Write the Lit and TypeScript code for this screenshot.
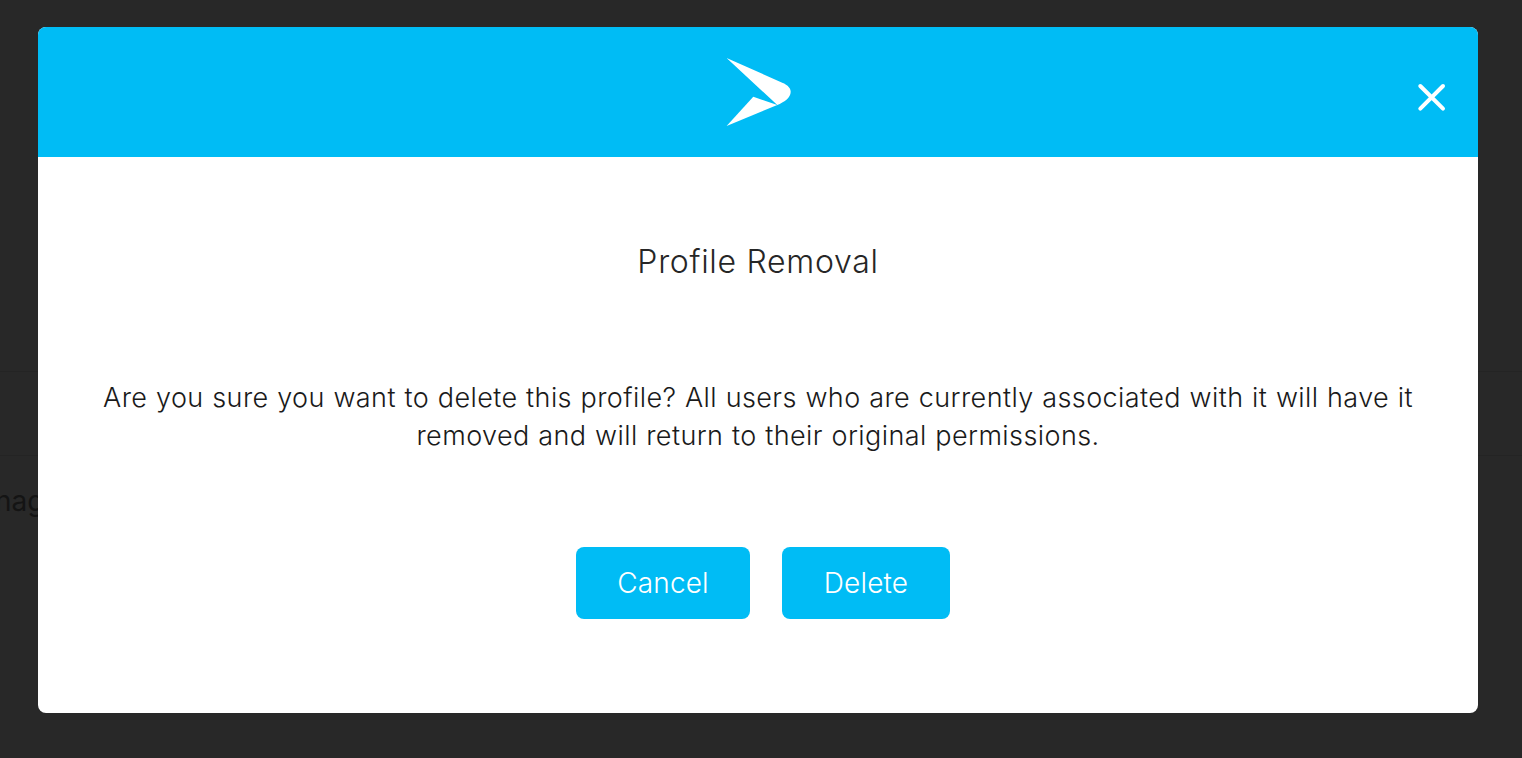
import { LitElement, html, css } from "lit";
import { customElement } from "lit/decorators.js";

@customElement("app-root")
export class AppRoot extends LitElement {
  static styles = css`
    :host {
      display: block;
      position: relative;
      width: 100%;
      height: 758px;
      overflow: hidden;
      background: #282828;
      font-family: Inter, "Liberation Sans", sans-serif;
    }
    .page {
      height: 100%;
      padding-top: 371px;
      box-sizing: border-box;
    }
    .row {
      height: 84px;
      border-top: 1px solid #242424;
      box-sizing: border-box;
    }
    .row-last {
      border-top: 1px solid #242424;
      padding: 28px 0 0 0;
      margin-left: -46px;
      font-size: 28px;
      line-height: 34px;
      color: #141414;
    }
    .overlay {
      position: absolute;
      inset: 0;
      display: flex;
      justify-content: center;
      align-items: flex-start;
      padding: 27px 6px 0 0;
      box-sizing: border-box;
    }
    .modal {
      width: 1440px;
      height: 686px;
      background: #fff;
      border-radius: 8px;
      overflow: hidden;
      display: flex;
      flex-direction: column;
      align-items: center;
    }
    .header {
      position: relative;
      align-self: stretch;
      height: 130px;
      flex: none;
      background: #00bcf5;
      display: flex;
      justify-content: center;
      padding-top: 31px;
      box-sizing: border-box;
    }
    .logo {
      width: 66px;
      height: 68px;
      display: block;
      margin-left: 1px;
    }
    .close {
      position: absolute;
      left: 1378px;
      top: 54px;
      width: 32px;
      height: 32px;
      display: block;
    }
    h2 {
      margin: 85px 0 0;
      font-size: 32px;
      line-height: 40px;
      font-weight: 340;
      letter-spacing: 0.7px;
      color: #262626;
    }
    p {
      margin: 97px 0 0;
      width: 1340px;
      text-align: center;
      font-size: 27px;
      line-height: 38px;
      font-weight: 350;
      letter-spacing: 0.41px;
      word-spacing: 0.6px;
      color: #1a1a1a;
    }
    .actions {
      display: flex;
      gap: 32px;
      margin: 92px 0 0 10px;
    }
    .btn {
      height: 72px;
      padding: 0;
      border: 0;
      border-radius: 8px;
      background: #00bcf5;
      color: #fff;
      font: 350 28px Inter, "Liberation Sans", sans-serif;
      letter-spacing: 0.15px;
    }
    .cancel {
      width: 174px;
    }
    .delete {
      width: 168px;
    }
  `;

  render() {
    return html`
      <div class="page">
        <div class="row"></div>
        <div class="row-last">Manage</div>
      </div>
      <div class="overlay">
        <div class="modal">
          <div class="header">
            <svg class="logo" viewBox="0 0 66 68">
              <path fill="#fff" d="M0.600 0 L54 23.700 C60 26 64.700 29 64.700 33.700 C64.700 40 58 44 51.300 47 Z" />
              <path fill="#fff" d="M27.300 38.700 L51.300 47 L0.600 68 Z" />
            </svg>
            <svg class="close" viewBox="0 0 32 32">
              <path stroke="#fff" stroke-width="4" stroke-linecap="round" d="M4.300 5 L27 27.700 M27 5 L4.300 27.700" />
            </svg>
          </div>
          <h2>Profile Removal</h2>
          <p>Are you sure you want to delete this profile? All users who are currently associated with it will have it removed and will return to their original permissions.</p>
          <div class="actions">
            <button class="btn cancel">Cancel</button>
            <button class="btn delete">Delete</button>
          </div>
        </div>
      </div>
    `;
  }
}
